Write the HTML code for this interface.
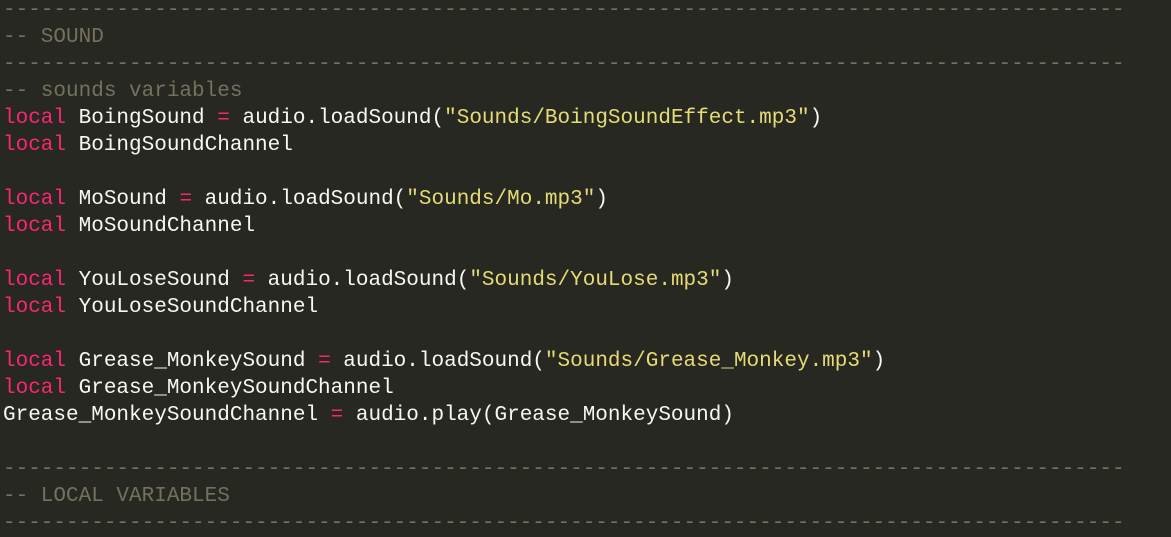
<!DOCTYPE html>
<html><head><style>
html,body{margin:0;padding:0;background:#272822;width:1171px;height:535px;overflow:hidden}
pre{margin:0;position:absolute;left:3px;top:-3.5px;font-family:"Liberation Mono",monospace;font-size:21px;line-height:27px;color:#F8F8F2;white-space:pre}
.c{color:#75715E}.k{color:#F92672}.s{color:#E6DB74}
</style></head><body><pre><span class="c">-----------------------------------------------------------------------------------------
-- SOUND
-----------------------------------------------------------------------------------------
-- sounds variables</span>
<span class="k">local</span> BoingSound <span class="k">=</span> audio.loadSound(<span class="s">"Sounds/BoingSoundEffect.mp3"</span>)
<span class="k">local</span> BoingSoundChannel

<span class="k">local</span> MoSound <span class="k">=</span> audio.loadSound(<span class="s">"Sounds/Mo.mp3"</span>)
<span class="k">local</span> MoSoundChannel

<span class="k">local</span> YouLoseSound <span class="k">=</span> audio.loadSound(<span class="s">"Sounds/YouLose.mp3"</span>)
<span class="k">local</span> YouLoseSoundChannel

<span class="k">local</span> Grease_MonkeySound <span class="k">=</span> audio.loadSound(<span class="s">"Sounds/Grease_Monkey.mp3"</span>)
<span class="k">local</span> Grease_MonkeySoundChannel
Grease_MonkeySoundChannel <span class="k">=</span> audio.play(Grease_MonkeySound)

<span class="c">-----------------------------------------------------------------------------------------
-- LOCAL VARIABLES
-----------------------------------------------------------------------------------------</span>
</pre></body></html>
